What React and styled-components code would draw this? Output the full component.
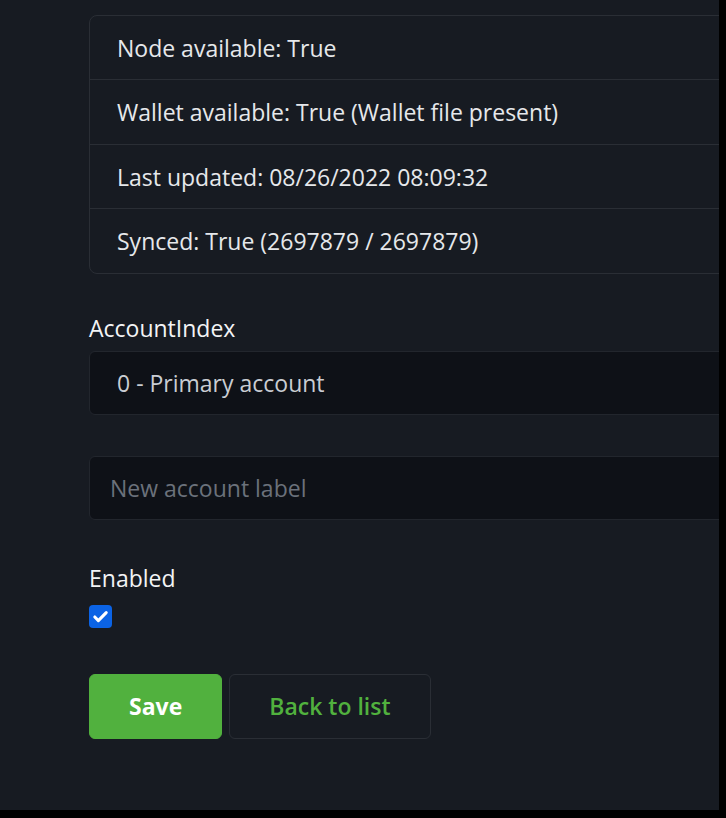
import React from 'react';
import styled, { createGlobalStyle } from 'styled-components';

const GlobalStyle = createGlobalStyle`
  html, body {
    margin: 0;
    padding: 0;
    background: #000;
  }
  body {
    font-family: "Open Sans", "Noto Sans", sans-serif;
  }
`;

const Frame = styled.div`
  width: 719px;
  height: 810px;
  overflow: hidden;
  background: #171b22;
  box-sizing: border-box;
  padding: 15px 0 0 89px;
`;

const Content = styled.div`
  width: 760px;
  font-size: 23px;
  line-height: 32px;
  color: #e6e8eb;
`;

const Card = styled.ul`
  list-style: none;
  margin: 0;
  padding: 0;
  border: 1px solid #2a2e35;
  border-radius: 8px;
  overflow: hidden;
`;

const CardRow = styled.li`
  padding: 16px 27px 15.4px;
  height: 32px;
  border-top: ${p => (p.$first ? 'none' : '1px solid #2a2e35')};
  white-space: nowrap;
`;

const FormGroup = styled.div`
  margin-top: ${p => p.$top}px;
`;

const Label = styled.label`
  display: block;
  color: #f3f4f6;
  margin-bottom: ${p => p.$gap || 10}px;
`;

const Select = styled.div`
  box-sizing: border-box;
  height: 64px;
  padding: 15px 27px;
  background: #0e1117;
  border: 1px solid #22262d;
  border-radius: 6px;
  color: #c9cdd3;
`;

const TextInput = styled.input`
  box-sizing: border-box;
  display: block;
  width: 100%;
  height: 64px;
  padding: 15px 20px;
  background: #0e1117;
  border: 1px solid #22262d;
  border-radius: 6px;
  color: #c9cdd3;
  font: inherit;
  outline: none;

  &::placeholder {
    color: #6b717b;
  }
`;

const Check = styled.span`
  display: flex;
  align-items: center;
  justify-content: center;
  width: 23px;
  height: 23px;
  border-radius: 4px;
  background: #0b63e5;
`;

const Buttons = styled.div`
  display: flex;
  gap: 7px;
  margin-top: 46px;
`;

const Button = styled.button`
  box-sizing: border-box;
  height: 65px;
  padding: 0 39px;
  border-radius: 6px;
  font: inherit;
  font-weight: ${p => (p.$primary ? 700 : 600)};
  background: ${p => (p.$primary ? '#51b13e' : 'transparent')};
  border: 1px solid ${p => (p.$primary ? '#51b13e' : '#2a2e35')};
  color: ${p => (p.$primary ? '#ffffff' : '#51b13e')};
`;

const rows = [
  'Node available: True',
  'Wallet available: True (Wallet file present)',
  'Last updated: 08/26/2022 08:09:32',
  'Synced: True (2697879 / 2697879)',
];

export default function App() {
  return (
    <>
      <GlobalStyle />
      <Frame>
        <Content>
          <Card>
            {rows.map((r, i) => (
              <CardRow key={r} $first={i === 0}>{r}</CardRow>
            ))}
          </Card>
          <FormGroup $top={38}>
            <Label $gap={7}>AccountIndex</Label>
            <Select>0 - Primary account</Select>
          </FormGroup>
          <FormGroup $top={41}>
            <TextInput placeholder="New account label" />
          </FormGroup>
          <FormGroup $top={42}>
            <Label $gap={11}>Enabled</Label>
            <Check>
              <svg width="19" height="19" viewBox="0 0 16 16" fill="none">
                <path d="M3.2 8.4l3 3L12.8 4.8" stroke="#fff" strokeWidth="2.6" strokeLinecap="round" strokeLinejoin="round" />
              </svg>
            </Check>
          </FormGroup>
          <Buttons>
            <Button $primary>Save</Button>
            <Button>Back to list</Button>
          </Buttons>
        </Content>
      </Frame>
    </>
  );
}
